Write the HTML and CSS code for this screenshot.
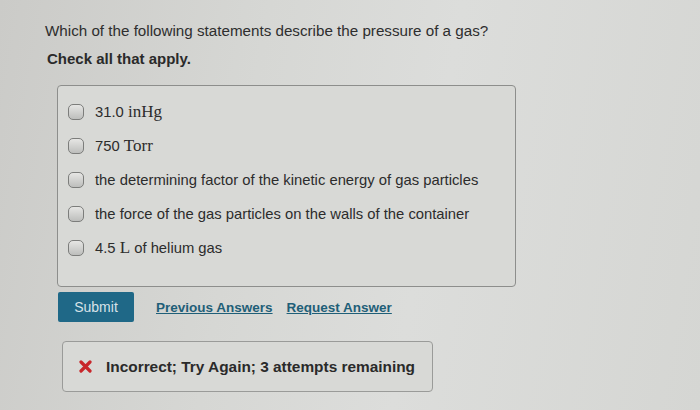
FILE: index.html
```html
<!DOCTYPE html>
<html>
<head>
<meta charset="utf-8">
<link rel="stylesheet" href="styles.css">
</head>
<body>
<div class="page">
  <p class="question">Which of the following statements describe the pressure of a gas?</p>
  <p class="instr">Check all that apply.</p>
  <div class="options">
    <label class="opt"><span class="box"></span><span class="txt">31.0 <span class="m">inHg</span></span></label>
    <label class="opt"><span class="box"></span><span class="txt">750 <span class="m">Torr</span></span></label>
    <label class="opt"><span class="box"></span><span class="txt">the determining factor of the kinetic energy of gas particles</span></label>
    <label class="opt"><span class="box"></span><span class="txt">the force of the gas particles on the walls of the container</span></label>
    <label class="opt"><span class="box"></span><span class="txt">4.5 <span class="m">L</span> of helium gas</span></label>
  </div>
  <div class="actions">
    <span class="submit">Submit</span>
    <a class="link">Previous Answers</a>
    <a class="link">Request Answer</a>
  </div>
  <div class="feedback">
    <svg class="xicon" width="13" height="13" viewBox="0 0 13 13"><path d="M2 2 L11 11 M11 2 L2 11" stroke="#c8262a" stroke-width="3.2" stroke-linecap="round"/></svg>
    <span class="fbtext">Incorrect; Try Again; 3 attempts remaining</span>
  </div>
</div>
</body>
</html>
```
FILE: styles.css
```css
html, body { margin: 0; padding: 0; }
body {
  width: 700px; height: 410px; overflow: hidden;
  background: linear-gradient(100deg, #cbcbc8 0%, #d6d7d4 35%, #dcdddb 60%, #d5d6d3 100%);
  font-family: "Liberation Sans", Arial, sans-serif;
  color: #2a2a2a;
}
.page { padding: 22px 0 0 45px; }
.question { margin: 0; font-size: 15.2px; line-height: 18px; color: #2e2e2e; }
.instr { margin: 10px 0 0 2px; font-size: 15px; font-weight: bold; line-height: 18px; color: #2a2a2a; }
.options {
  margin: 17px 0 0 12px;
  width: 447px;
  border: 1px solid #8d8e8c;
  border-radius: 4px;
  padding: 16px 0 29px 10px;
  display: flex; flex-direction: column; gap: 15px;
  background: #d8d9d6;
}
.opt { display: flex; align-items: center; gap: 11px; height: 19px; font-size: 14.8px; color: #2c2c2c; }
.box {
  width: 14px; height: 14px; border: 1.5px solid #7c7d7b; border-radius: 5px;
  background: linear-gradient(#e6e6e4, #bdbebc);
  flex: none;
}
.m { font-family: "Liberation Serif", "Times New Roman", serif; font-size: 17px; }
.actions { display: flex; align-items: center; margin: 5px 0 0 13px; }
.submit {
  background: #1f6887; color: #d8e2e8; font-size: 14px;
  width: 76px; height: 30px; display: flex; align-items: center; justify-content: center;
  border-radius: 2px;
}
.link { color: #1f5f78; font-weight: bold; font-size: 13.5px; text-decoration: underline; margin-left: 22px; }
.link + .link { margin-left: 14px; }
.feedback {
  margin: 19px 0 0 17px;
  width: 369px; height: 49px;
  border: 1px solid #9a9b99; border-radius: 4px;
  display: flex; align-items: center;
  background: #d8d9d6;
}
.xicon { margin-left: 16px; }
.fbtext { margin-left: 14px; font-weight: bold; font-size: 15.4px; color: #2a2a2a; }
```
